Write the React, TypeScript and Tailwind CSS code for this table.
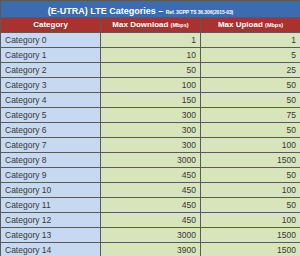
import React from 'react';

const ROWS: [string, number, number][] = [
  ['Category 0', 1, 1],
  ['Category 1', 10, 5],
  ['Category 2', 50, 25],
  ['Category 3', 100, 50],
  ['Category 4', 150, 50],
  ['Category 5', 300, 75],
  ['Category 6', 300, 50],
  ['Category 7', 300, 100],
  ['Category 8', 3000, 1500],
  ['Category 9', 450, 50],
  ['Category 10', 450, 100],
  ['Category 11', 450, 50],
  ['Category 12', 450, 100],
  ['Category 13', 3000, 1500],
  ['Category 14', 3900, 1500],
];

export default function App() {
  return (
    <div className="w-[300px] h-[256px] overflow-hidden bg-[#d8e4bc] font-['Liberation_Sans',Arial,sans-serif]">
      <table className="w-[300px] table-fixed border-collapse border border-[#5a5a5a]">
        <colgroup>
          <col className="w-[100px]" />
          <col className="w-[100px]" />
          <col className="w-[100px]" />
        </colgroup>
        <thead>
          <tr className="h-[15px]">
            <th
              colSpan={3}
              className="bg-[#3a6cae] text-white text-center p-0 pr-[20px] leading-none border border-[#5a5a5a] whitespace-nowrap"
            >
              <span className="text-[9px] font-bold">(E-UTRA) LTE Categories</span>
              <span className="text-[9px] font-bold"> – </span>
              <span className="text-[5px] font-bold tracking-[-0.1px]">Ref. 3GPP TS 36.306(2015-03)</span>
            </th>
          </tr>
          <tr className="h-[15px]">
            <th className="bg-[#a9312f] text-white text-[8px] font-bold p-0 leading-none border border-[#5a5a5a]">
              Category
            </th>
            <th className="bg-[#a9312f] text-white text-[8px] font-bold p-0 leading-none border border-[#5a5a5a] whitespace-nowrap">
              Max Download <span className="text-[5.5px]">(Mbps)</span>
            </th>
            <th className="bg-[#a9312f] text-white text-[8px] font-bold p-0 leading-none border border-[#5a5a5a] whitespace-nowrap">
              Max Upload <span className="text-[5.5px]">(Mbps)</span>
            </th>
          </tr>
        </thead>
        <tbody>
          {ROWS.map(([cat, down, up]) => (
            <tr key={cat} className="h-[15px]">
              <td className="bg-[#c6d9f0] text-[#383838] text-[8.5px] pl-[4px] p-0 leading-none border border-[#5a5a5a]">
                {cat}
              </td>
              <td className="bg-[#d8e4bc] text-[#383838] text-[8.5px] text-right pr-[4px] p-0 leading-none border border-[#5a5a5a]">
                {down}
              </td>
              <td className="bg-[#d8e4bc] text-[#383838] text-[8.5px] text-right pr-[4px] p-0 leading-none border border-[#5a5a5a]">
                {up}
              </td>
            </tr>
          ))}
        </tbody>
      </table>
    </div>
  );
}
